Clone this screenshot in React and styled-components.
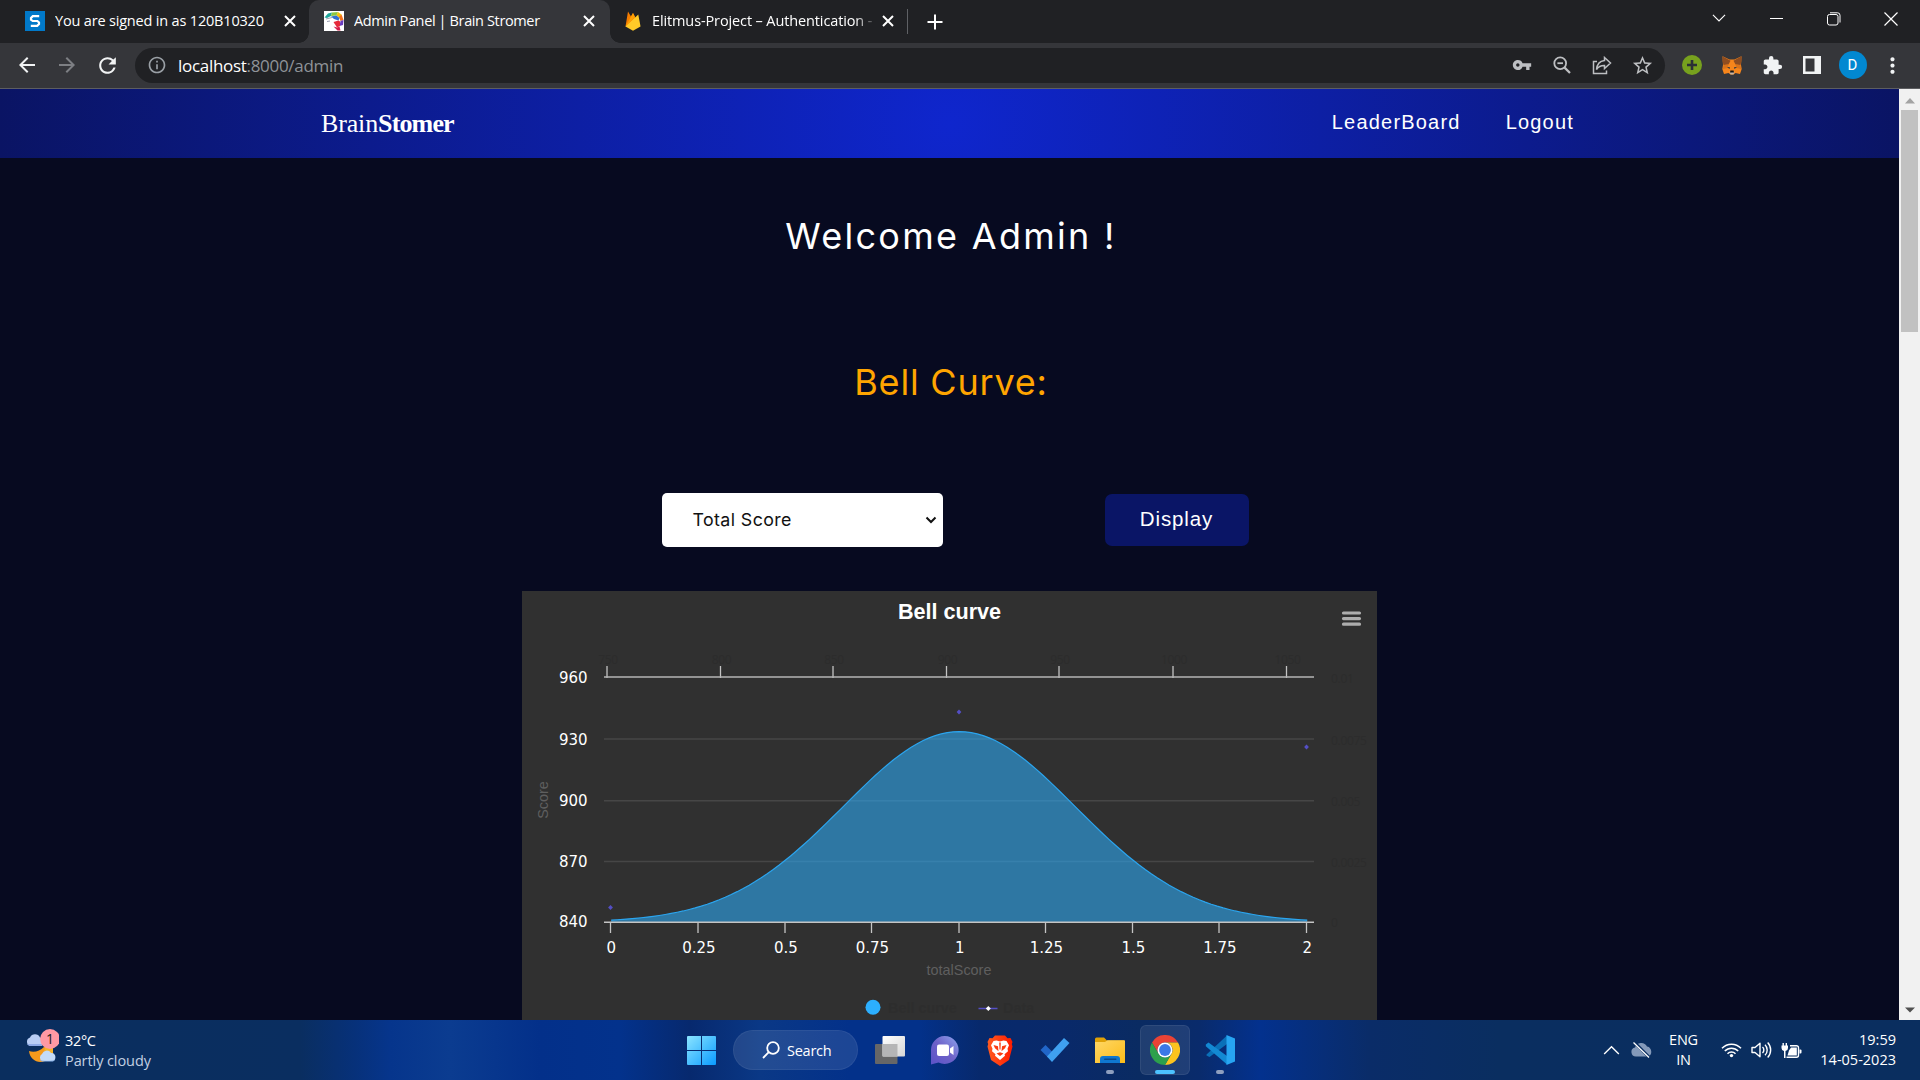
import React from "react";
import styled, { createGlobalStyle } from "styled-components";
import {
  MdArrowBack,
  MdArrowForward,
  MdRefresh,
  MdInfoOutline,
  MdVpnKey,
  MdStarBorder,
  MdExtension,
  MdMoreVert,
} from "react-icons/md";

const GlobalStyle = createGlobalStyle`
  * { box-sizing: border-box; }
  html, body { margin: 0; padding: 0; background: #070920; overflow: hidden; }
  body { font-family: "Open Sans", "Noto Sans", sans-serif; }
  svg { display: block; flex: none; }
`;

const Screen = styled.div`
  width: 1920px;
  height: 1080px;
  display: flex;
  flex-direction: column;
  overflow: hidden;
`;

/* ---------- Browser chrome ---------- */

const TabStrip = styled.div`
  height: 43px;
  flex: none;
  display: flex;
  background: #202124;
`;

const Tab = styled.div`
  position: relative;
  width: ${(p) => p.$width}px;
  height: 43px;
  padding: 0 ${(p) => p.$right}px 2px ${(p) => p.$left}px;
  display: flex;
  align-items: center;
  color: #fff;
  background: ${(p) => (p.$active ? "#35363a" : "transparent")};
  border-radius: 10px 10px 0 0;
  ${(p) =>
    p.$active &&
    `
    &::before, &::after {
      content: "";
      position: absolute;
      bottom: 0;
      width: 10px;
      height: 10px;
    }
    &::before {
      left: -10px;
      background: radial-gradient(circle at 0 0, transparent 9.5px, #35363a 10px);
    }
    &::after {
      right: -10px;
      background: radial-gradient(circle at 100% 0, transparent 9.5px, #35363a 10px);
    }
  `}
`;

const TabTitle = styled.span`
  flex: 1;
  margin-left: ${(p) => p.$gap}px;
  font-size: 14.5px;
  line-height: 20px;
  letter-spacing: ${(p) => p.$spacing}px;
  white-space: nowrap;
  overflow: hidden;
  ${(p) => p.$fade && "mask-image: linear-gradient(90deg, #000 88%, transparent 98%);"}
`;

const TabDivider = styled.div`
  width: 1px;
  height: 25px;
  margin-top: 9px;
  background: #5f6165;
`;

const NewTab = styled.div`
  width: 54px;
  height: 43px;
  display: flex;
  align-items: center;
  justify-content: center;
`;

const WindowControls = styled.div`
  margin-left: auto;
  height: 37px;
  display: flex;
  align-items: center;
`;

const WindowButton = styled.div`
  width: 57.3px;
  display: flex;
  justify-content: center;
`;

const Toolbar = styled.div`
  height: 46px;
  flex: none;
  display: flex;
  align-items: center;
  padding: 0 8px 1px 7px;
  background: #35363a;
  border-bottom: 1px solid #5d5e61;
`;

const ToolSlot = styled.div`
  width: ${(p) => p.$width || 40}px;
  flex: none;
  display: flex;
  justify-content: center;
  color: ${(p) => p.$color || "#f1f3f4"};
`;

const Omnibox = styled.div`
  width: 1530px;
  height: 35px;
  margin-left: 8px;
  padding-left: 12px;
  border-radius: 18px;
  display: flex;
  align-items: center;
  background: #202124;
  color: #9aa0a6;
`;

const Url = styled.span`
  flex: 1;
  margin-left: 11px;
  padding-top: 1px;
  font-size: 17px;
  line-height: 24px;
  letter-spacing: -0.3px;
  color: #8f9398;
  b { font-weight: 400; color: #fff; }
`;

const Avatar = styled.div`
  width: 28px;
  height: 28px;
  border-radius: 50%;
  margin-left: 1px;
  display: flex;
  align-items: center;
  justify-content: center;
  background: #0288d1;
  color: #fff;
  font: 15px/28px Roboto, sans-serif;
`;

/* ---------- Page ---------- */

const Viewport = styled.div`
  height: 931px;
  flex: none;
  display: flex;
`;

const Page = styled.main`
  width: 1899px;
  display: flex;
  flex-direction: column;
  align-items: center;
  background: #070a20;
  overflow: hidden;
`;

const SiteHeader = styled.header`
  width: 100%;
  height: 69px;
  flex: none;
  padding: 0 325px 0 321px;
  display: flex;
  justify-content: space-between;
  align-items: center;
  background: radial-gradient(circle 950px at center, #0f26cd 0%, #0a1464 100%);
`;

const Brand = styled.div`
  color: #fff;
  font: 26px/36px "Liberation Serif", serif;
  letter-spacing: -0.15px;
  b { letter-spacing: -0.85px; }
`;

const Nav = styled.nav`
  display: flex;
  gap: 45px;
  padding-bottom: 4px;
`;

const NavLink = styled.a`
  color: #fff;
  font: 20px/28px "Liberation Sans", sans-serif;
  letter-spacing: 1.2px;
`;

const Heading = styled.h1`
  height: 48px;
  flex: none;
  margin: ${(p) => p.$top}px 0 0;
  padding-left: 3px;
  color: ${(p) => p.$color};
  font: 400 36px/48px Inter, sans-serif;
  letter-spacing: ${(p) => p.$spacing}px;
  white-space: pre;
`;

const Controls = styled.div`
  height: 54px;
  flex: none;
  margin: 87px 0 44px 12px;
  display: flex;
  align-items: center;
  gap: 162px;
`;

const SelectBox = styled.div`
  width: 281px;
  height: 54px;
  padding: 0 6px 0 30.5px;
  border-radius: 5px;
  display: flex;
  align-items: center;
  justify-content: space-between;
  background: #fff;
  color: #111;
  font: 17.8px/26px Inter, sans-serif;
  letter-spacing: 0.4px;
`;

const DisplayButton = styled.button`
  width: 144px;
  height: 52px;
  padding: 0 1px 2px 0;
  border: 0;
  border-radius: 7px;
  background: #0a1566;
  color: #fff;
  font: 20.5px/26px "Liberation Sans", sans-serif;
  letter-spacing: 0.9px;
`;

const ChartPanel = styled.section`
  width: 855px;
  height: 430px;
  flex: none;
  background: #303030;
`;

const Scrollbar = styled.div`
  width: 21px;
  display: flex;
  flex-direction: column;
  align-items: center;
  padding: 9px 0 7px;
  background: #f1f1f1;
`;

const Thumb = styled.div`
  width: 17px;
  height: 222px;
  margin-top: 6px;
  margin-bottom: auto;
  background: #c1c1c1;
`;

/* ---------- Taskbar ---------- */

const Taskbar = styled.footer`
  height: 60px;
  flex: none;
  display: flex;
  background: linear-gradient(
    90deg,
    #0a2e5e 0px, #0a2e60 300px, #07317a 355px, #06358c 390px, #0b3c90 450px,
    #03308a 540px, #03328c 620px, #07296e 690px, #0a3886 760px, #03318a 850px,
    #03318a 920px, #07296c 980px, #09296a 1060px, #0a2b62 1140px, #092b6c 1200px,
    #03318e 1260px, #0a2c68 1370px, #0a2e60 1500px, #0a2e5f 1920px
  );
  color: #fff;
`;

const Weather = styled.div`
  width: 660px;
  padding: 7px 0 0 25px;
  display: flex;
`;

const WeatherText = styled.div`
  margin: 4px 0 0 6px;
  font-size: 14.5px;
  line-height: 20px;
  letter-spacing: -0.35px;
  div + div { color: #c3d0e2; letter-spacing: -0.08px; }
`;

const Dock = styled.div`
  width: 590px;
  padding: 5px 0 0 12px;
  display: flex;
`;

const DockItem = styled.div`
  position: relative;
  width: ${(p) => p.$width || 55}px;
  height: 50px;
  display: flex;
  align-items: center;
  justify-content: center;
`;

const Indicator = styled.span`
  position: absolute;
  bottom: 1px;
  left: 50%;
  width: ${(p) => (p.$active ? 20 : 8)}px;
  height: 4px;
  border-radius: 2px;
  transform: translateX(-50%);
  background: ${(p) => (p.$active ? "#4cc2ff" : "#8e9fbf")};
`;

const ActiveTile = styled.div`
  width: 50px;
  height: 50px;
  border-radius: 6px;
  display: flex;
  align-items: center;
  justify-content: center;
  background: rgba(255, 255, 255, 0.09);
  border: 1px solid rgba(255, 255, 255, 0.07);
`;

const SearchPill = styled.div`
  width: 125px;
  height: 40px;
  border-radius: 20px;
  padding: 0 0 0 28px;
  display: flex;
  align-items: center;
  gap: 7px;
  background: rgba(255, 255, 255, 0.1);
  border: 1px solid rgba(255, 255, 255, 0.06);
  font-size: 14.5px;
  letter-spacing: -0.25px;
`;

const Tray = styled.div`
  margin-left: auto;
  height: 60px;
  display: flex;
  align-items: center;
  padding-right: 24px;
`;

const TrayText = styled.div`
  width: ${(p) => p.$width}px;
  padding-right: ${(p) => p.$inset || 0}px;
  font-size: 14.5px;
  line-height: 20px;
  letter-spacing: ${(p) => p.$spacing}px;
  text-align: ${(p) => p.$align};
`;

const TraySlot = styled.div`
  width: 30px;
  display: flex;
  justify-content: center;
`;

/* ---------- Icons ---------- */

const TabClose = () => (
  <svg width="12" height="12" viewBox="0 0 12 12" stroke="#fff" strokeWidth="2">
    <path d="M1 1l10 10M11 1L1 11" />
  </svg>
);

const SFavicon = () => (
  <svg width="20" height="20" viewBox="0 0 20 20">
    <rect width="20" height="20" fill="#0179c9" />
    <path d="M14.2 5.2H7.8L6 7v1.6l1.8 1.4h4.6l1.6 1.4V13l-1.8 1.8H5.8" fill="none" stroke="#fff" strokeWidth="2.2" />
  </svg>
);

const BrainFavicon = () => (
  <svg width="20" height="20" viewBox="0 0 20 20">
    <rect width="20" height="20" fill="#fff" />
    <path d="M0.500 6.500L4 2.500 8 1.500 7 5 3 7z" fill="#1fa79b" />
    <path d="M8 1.500L14 1l-1.500 3.500L7 5z" fill="#8cc63f" />
    <path d="M14 1l3.500 2.500L16 7l-3.500-2.500z" fill="#f4c20d" />
    <path d="M17.500 3.500L19.500 9l-3 1L15 6z" fill="#f0701d" />
    <path d="M7 5.500L12.500 4.500 15.500 7l-1 2.500L10 8z" fill="#2f6fd0" />
    <path d="M16.500 10l3-1-0.500 5-3.500 1z" fill="#6a3cc0" />
    <path d="M9.500 11l5-1.500 1.500 1v4.500l-3 1.500z" fill="#e62a3a" />
    <path d="M9.500 15.500l3.500 1 2.500-1 1 4h-3z" fill="#d51c4a" />
    <path d="M2 8l6-1.500M3 10.500L6 10" stroke="#8c93a8" strokeWidth="0.900" />
  </svg>
);

const FirebaseFavicon = () => (
  <svg width="16" height="20" viewBox="0 0 16 20">
    <path d="M0.500 15.500L3 0.500l3 5L8 2l7 13.500z" fill="#f57c00" />
    <path d="M0.500 15.500L8 2l2 4z" fill="#ffa000" />
    <path d="M0.500 15.500L13.300 3.600 15.500 15.500 8 19.700z" fill="#ffca28" />
  </svg>
);

const ZoomOutIcon = () => (
  <svg width="18" height="18" viewBox="0 0 18 18" fill="none" stroke="#bdbfc2" strokeWidth="1.8">
    <circle cx="7.200" cy="7.200" r="5.900" />
    <path d="M11.600 11.600l5.400 5.400" strokeWidth="2.200" />
    <path d="M4.400 7.200h5.600" />
  </svg>
);

const ShareIcon = () => (
  <svg width="20" height="19" viewBox="0 0 20 19" fill="none" stroke="#bdbfc2" strokeWidth="1.500">
    <path d="M5 5.500H1.500V17.500H14.500V14.500" />
    <path d="M12.500 1.500L18.500 7l-6 5.500V9.500C8.500 9.400 6.300 10.700 4.500 13.500 5 8.500 8 5 12.500 4.500z" />
  </svg>
);

const FoxIcon = () => (
  <svg width="20" height="19" viewBox="0 0 20 19">
    <path d="M0.500 0.300L7.500 3.500h5L19.500 0.300 19 9l0.700 4-1.700 5-4.500-1L11.500 18.500h-3L6.500 17 2 18l-1.700-5L1 9z" fill="#f6851b" />
    <path d="M0.500 0.300L8.500 4.800 6.500 8.500 1.500 9 0.500 5z" fill="#8f4d20" />
    <path d="M19.500 0.300L11.500 4.800l2 3.700 5 0.500 1-4z" fill="#8f4d20" />
    <path d="M1.500 9L6.500 8.500 5.500 12 1 13z" fill="#d9731a" />
    <path d="M18.500 9l-5-0.500 1 3.500 4.500 1z" fill="#d9731a" />
    <path d="M5 11l3 0.300L7.500 13zM15 11l-3 0.300 0.500 1.700z" fill="#233447" />
    <path d="M7.500 15.500L8.500 18.500h3l1-3z" fill="#c8b4a2" />
    <path d="M8.400 14.600h3.200l0.400 1.900H8z" fill="#161616" />
  </svg>
);

const Chevron = ({ up, size = 15, color = "#fff" }) => (
  <svg width={size} height={size * 0.6} viewBox="0 0 15 9" fill="none" stroke={color} strokeWidth="1.200">
    <path d={up ? "M1 8l6.500-6.500L14 8" : "M1 1l6.500 6.500L14 1"} />
  </svg>
);

const WeatherIcon = () => (
  <svg width="34" height="38" viewBox="0 0 34 38">
    <path d="M4 24c5 2 11 0 15-4l5-1 4 1v9l-8 5c-7 3-15-1-16-10z" fill="#f59a1c" />
    <path d="M20 20h8v6h-9z" fill="#f7b32a" />
    <path d="M5 19a4.500 4.500 0 0 1 0-8.500 5.500 5.500 0 0 1 10 0c3 0 4 8 1 8.500z" fill="#b8cdf5" />
    <path d="M5 19a4.500 4.500 0 0 1-3-2h16l-1 2z" fill="#8eaae6" />
    <path d="M17 34a4 4 0 0 1 0-7 5 5 0 0 1 9-1c5-1 6 7 2 8z" fill="#c4dbf8" />
    <path d="M14 33c3 1 13 1 16 0l-2 1.500H17z" fill="#8cb4ea" />
    <circle cx="25" cy="12" r="9.900" fill="#ff99a4" />
    <text x="25" y="17" textAnchor="middle" fontSize="14" fontFamily="Open Sans, sans-serif" fill="#1b1b1b">1</text>
  </svg>
);

const WindowsLogo = () => (
  <svg width="29" height="29" viewBox="0 0 29 29">
    <defs>
      <linearGradient id="win" x1="0" y1="0" x2="1" y2="1">
        <stop offset="0" stopColor="#8be4ff" />
        <stop offset="1" stopColor="#0a9bff" />
      </linearGradient>
    </defs>
    <path d="M1 0h13v14H0V1a1 1 0 0 1 1-1zM15 0h13a1 1 0 0 1 1 1v13H15zM0 15h14v14H1a1 1 0 0 1-1-1zM15 15h14v13a1 1 0 0 1-1 1H15z" fill="url(#win)" />
  </svg>
);

const TaskViewIcon = () => (
  <svg width="30" height="28" viewBox="0 0 30 28">
    <defs>
      <linearGradient id="tv" x1="0" y1="0" x2="1" y2="1">
        <stop offset="0" stopColor="#fff" />
        <stop offset="1" stopColor="#d6d6d6" />
      </linearGradient>
    </defs>
    <rect x="0" y="8" width="22.500" height="20" rx="1" fill="#666667" />
    <rect x="7.500" y="0" width="22.500" height="20.500" rx="1" fill="url(#tv)" />
    <rect x="7.500" y="8" width="15" height="12.500" fill="#b5b5b6" />
  </svg>
);

const ChatIcon = () => (
  <svg width="29" height="29" viewBox="0 0 29 29">
    <defs>
      <linearGradient id="chat" x1="0" y1="1" x2="1" y2="0">
        <stop offset="0" stopColor="#5a52c8" />
        <stop offset="0.500" stopColor="#6e62c8" />
        <stop offset="1" stopColor="#8ea6f0" />
      </linearGradient>
    </defs>
    <path d="M14.500 0a14 14 0 1 1-6 26.600L1 28.500V15A14 14 0 0 1 14.500 0z" fill="url(#chat)" />
    <rect x="7" y="8.500" width="12" height="11.500" rx="2" fill="#fff" />
    <path d="M20 12.500l3.500-2.500v9L20 16.500z" fill="#fff" />
  </svg>
);

const BraveIcon = () => (
  <svg width="26" height="31" viewBox="0 0 26 31">
    <defs>
      <linearGradient id="brave">
        <stop offset="0" stopColor="#ff5a1f" />
        <stop offset="1" stopColor="#ff1c00" />
      </linearGradient>
    </defs>
    <path d="M8 0.500h10l2.500 2.700 3-0.300 2 4-0.700 2 0.700 2.500-3.500 13.500-9 6-9-6L0.500 11.400l0.700-2.500-0.700-2 2-4 3 0.300z" fill="url(#brave)" />
    <path d="M13 6.500l3.500-0.900 3 0.400 2.500 4.200-1.500 3.500 0.500 2.500-3.500 3 0.500 1.500L13 25l-5-4.300 0.500-1.500-3.500-3 0.500-2.500L4 10.200 6.500 6l3-0.400z" fill="#fff" />
    <path d="M6.500 10l4.500 1.200 0.500 5-3.500-3zM19.500 10l-4.500 1.200-0.500 5 3.500-3zM9.500 18.500l3.500-1.300 3.500 1.300-3.500 2.600zM12.200 7.500h1.600l-0.300 7h-1z" fill="#fb3b10" />
  </svg>
);

const TodoIcon = () => (
  <svg width="30" height="26" viewBox="0 0 30 26">
    <path d="M0.500 13l5-5 8 8-5 5z" fill="#2166c9" />
    <path d="M7 19.500L24 1l5.500 5L12 25z" fill="#3fa0f0" />
  </svg>
);

const FolderIcon = () => (
  <svg width="30" height="27" viewBox="0 0 30 27">
    <defs>
      <linearGradient id="fold" x1="0" y1="0" x2="1" y2="1">
        <stop offset="0" stopColor="#ffd766" />
        <stop offset="1" stopColor="#fcbc19" />
      </linearGradient>
    </defs>
    <path d="M0 5V2a1.500 1.500 0 0 1 1.500-1.500H9l3 3h17A1 1 0 0 1 30 5v4H0z" fill="#e0a106" />
    <path d="M0 5h10l2.500-1.800H29a1 1 0 0 1 1 1V26H0z" fill="url(#fold)" />
    <path d="M5 26v-4a3 3 0 0 1 3-3h14a3 3 0 0 1 3 3v4z" fill="#0f77d0" />
    <rect x="9" y="21.500" width="12.500" height="1.500" rx="0.700" fill="#0a4a8c" />
  </svg>
);

const ChromeIcon = () => (
  <svg width="30" height="30" viewBox="0 0 30 30">
    <path d="M2 7.500A15 15 0 0 1 28 7.500H15a7.500 7.500 0 0 0-6.500 11.200z" fill="#ea4335" />
    <path d="M28 7.500A15 15 0 0 1 15 30l6.500-11.200A7.500 7.500 0 0 0 15 7.500z" fill="#fcc31e" />
    <path d="M15 30A15 15 0 0 1 2 7.500l6.500 11.300a7.500 7.500 0 0 0 13 0z" fill="#2da04c" />
    <circle cx="15" cy="15" r="7.500" fill="#fff" />
    <circle cx="15" cy="15" r="5.900" fill="#3b78e7" />
  </svg>
);

const CodeIcon = () => (
  <svg width="30" height="30" viewBox="0 0 30 30">
    <path d="M1.500 19.500L22 0.500v8.500L4.500 22l-3-1.500z" fill="#0a70b8" />
    <path d="M0.800 9.500l2.700-2L22 21v8.500L0.800 11.200z" fill="#1389d3" />
    <path d="M21.500 0L30 3.500v23L21.500 30z" fill="#27a5f2" />
  </svg>
);

const CloudOff = () => (
  <svg width="21" height="18" viewBox="0 0 21 18">
    <path d="M5 15.500a4.500 4.500 0 0 1-1-8.900A6.500 6.500 0 0 1 16 5.500c5 0.500 6 9 1 10z" fill="#8499b9" />
    <path d="M3 1l16 16" stroke="#0a2e60" strokeWidth="3" />
    <path d="M2.500 1.500L18 16.500" stroke="#fff" strokeWidth="1.300" />
  </svg>
);

const WifiIcon = () => (
  <svg width="21" height="16" viewBox="0 0 21 16" fill="none" stroke="#fff" strokeWidth="1.500">
    <path d="M1 6.300a13.200 13.200 0 0 1 19 0M3.800 9.100a9.200 9.200 0 0 1 13.400 0M6.500 11.700a5.500 5.500 0 0 1 8 0" />
    <circle cx="10.500" cy="13.600" r="1.700" fill="#fff" stroke="none" />
  </svg>
);

const VolumeIcon = () => (
  <svg width="21" height="18" viewBox="0 0 21 18" fill="none" stroke="#fff" strokeWidth="1.400">
    <path d="M1 6.500h3L9 2.200v13.600L4 11.500H1z" strokeLinejoin="round" />
    <path d="M11.500 6a4 4 0 0 1 0 6M14 3.700a7.500 7.500 0 0 1 0 10.600M16.700 1.500a11 11 0 0 1 0 15" />
  </svg>
);

const BatteryIcon = () => (
  <svg width="21" height="17" viewBox="0 0 21 17">
    <path d="M9 3.700h6.500a2 2 0 0 1 2 2v7.600a2 2 0 0 1-2 2H5.500" fill="none" stroke="#fff" strokeWidth="1.400" />
    <path d="M8 8.500L10 5.500h5.800v8H6.500z" fill="#fff" />
    <path d="M18.500 7.500h1a1 1 0 0 1 1 1v2a1 1 0 0 1-1 1h-1z" fill="#fff" />
    <path d="M0.500 3.500h1V1h1.400v2.500h1.700V1H6v2.500h1V6a3 3 0 0 1-2.500 3v7H3V9A3 3 0 0 1 0.500 6z" fill="#fff" />
  </svg>
);

/* ---------- Chart ---------- */

const MEAN_X = 437.2;
const SIGMA = 116;
const BASE_Y = 331.2;
const PEAK = 190.6;

const curve = Array.from({ length: 117 }, (_, i) => {
  const x = MEAN_X - 3 * SIGMA + i * 6;
  const y = BASE_Y - PEAK * Math.exp(-0.5 * ((x - MEAN_X) / SIGMA) ** 2);
  return `${x.toFixed(1)} ${y.toFixed(2)}`;
}).join("L");

const bottomTicks = [
  [88.500, "0"], [176, "0.25"], [263, "0.5"], [349.500, "0.75"], [437, "1"],
  [523.500, "1.25"], [610.500, "1.5"], [697, "1.75"], [784.500, "2"],
];
const topTicks = [
  [85, "750"], [198.500, "800"], [311, "850"], [424.500, "900"],
  [537, "950"], [651, "1000"], [764.500, "1050"],
];
const leftTicks = [
  [92, "960", "0.01"], [153.500, "930", "0.0075"], [215, "900", "0.005"],
  [276, "870", "0.0025"], [336, "840", "0"],
];
const points = [[88.500, 316.500], [437, 121], [784.500, 156]];

const AxisLabel = styled.text`
  font: 15px "DejaVu Sans", Verdana, sans-serif;
  letter-spacing: -0.05px;
  fill: #fff;
`;

const FaintLabel = styled.text`
  font: 12px "Open Sans", sans-serif;
  letter-spacing: -0.3px;
  fill: #2c2c2c;
`;

const AxisTitle = styled.text`
  font: 14.4px "Liberation Sans", Arial, sans-serif;
  fill: #5f5f5f;
`;

const ChartTitle = styled.text`
  font: bold 21.6px "Liberation Sans", Arial, sans-serif;
  fill: #fff;
`;

const LegendLabel = styled.text`
  font: bold 14.4px "Liberation Sans", Arial, sans-serif;
  fill: #2d2d2d;
`;

const BellChart = () => (
  <svg width="855" height="430" viewBox="0 0 855 430">
    <ChartTitle x="427.500" y="28" textAnchor="middle">Bell curve</ChartTitle>
    <path d="M821.500 22h16M821.500 27.600h16M821.500 33.200h16" stroke="#adadad" strokeWidth="3.200" strokeLinecap="round" />
    {topTicks.map(([x, label]) => (
      <g key={label}>
        <path d={`M${x} 75v12`} stroke="#c4c4c4" strokeWidth="1.300" />
        <FaintLabel x={x + 1} y="73" textAnchor="middle">{label}</FaintLabel>
      </g>
    ))}
    <path d="M82 148h710M82 209.700h710M82 270.500h710" stroke="#464646" strokeWidth="1.400" />
    <path d={`M${curve}V${BASE_Y}H${MEAN_X - 3 * SIGMA}z`} fill="#2caffe" fillOpacity="0.560" />
    <path d={`M${curve}`} fill="none" stroke="#2ba5ef" strokeWidth="1.200" />
    <path d="M82 86h710" stroke="#b4b4b4" strokeWidth="1.700" />
    <path d="M82 331.300h710" stroke="#c4c4c4" strokeWidth="1.400" />
    {bottomTicks.map(([x, label]) => (
      <g key={label}>
        <path d={`M${x} 331v11`} stroke="#c4c4c4" strokeWidth="1.300" />
        <AxisLabel x={x + 0.800} y="362" textAnchor="middle">{label}</AxisLabel>
      </g>
    ))}
    {leftTicks.map(([y, label, right]) => (
      <g key={label}>
        <AxisLabel x="65.500" y={y} textAnchor="end">{label}</AxisLabel>
        <FaintLabel x="809" y={y}>{right}</FaintLabel>
      </g>
    ))}
    {points.map(([x, y]) => (
      <path key={x} d={`M${x} ${y - 2.400}l2.400 2.400-2.400 2.400-2.400-2.400z`} fill="#544fc5" />
    ))}
    <AxisTitle x="437" y="384" textAnchor="middle">totalScore</AxisTitle>
    <AxisTitle transform="translate(26 209) rotate(-90)" textAnchor="middle">Score</AxisTitle>
    <circle cx="351" cy="416.300" r="7.500" fill="#2caffe" />
    <LegendLabel x="366" y="421.700">Bell curve</LegendLabel>
    <path d="M456.500 417.500h19" stroke="#544fc5" strokeWidth="1.500" />
    <path d="M466.300 415l2.500 2.500-2.500 2.500-2.500-2.500z" fill="#fff" />
    <LegendLabel x="481" y="421.700">Data</LegendLabel>
  </svg>
);

export default function App() {
  return (
    <>
      <GlobalStyle />
      <Screen>
        <TabStrip>
          <Tab $width={309} $left={25} $right={13}>
            <SFavicon />
            <TabTitle $gap={10} $spacing={-0.18}>You are signed in as 120B10320</TabTitle>
            <TabClose />
          </Tab>
          <Tab $active $width={301} $left={15} $right={15}>
            <BrainFavicon />
            <TabTitle $gap={10} $spacing={-0.37}>Admin Panel | Brain Stromer</TabTitle>
            <TabClose />
          </Tab>
          <Tab $width={297} $left={15} $right={13}>
            <FirebaseFavicon />
            <TabTitle $gap={11} $spacing={-0.12} $fade>Elitmus-Project – Authentication -</TabTitle>
            <TabClose />
          </Tab>
          <TabDivider />
          <NewTab>
            <svg width="16" height="16" viewBox="0 0 16 16" stroke="#fff" strokeWidth="2">
              <path d="M8 0.500v15M0.500 8h15" />
            </svg>
          </NewTab>
          <WindowControls>
            <WindowButton><Chevron size={14} /></WindowButton>
            <WindowButton>
              <svg width="13" height="13" viewBox="0 0 13 13"><path d="M0 6.500h13" stroke="#fff" /></svg>
            </WindowButton>
            <WindowButton>
              <svg width="14" height="14" viewBox="0 0 14 14" fill="none" stroke="#fff">
                <rect x="0.500" y="2.500" width="10.500" height="10.500" rx="2" />
                <path d="M3 0.800h7.500a2.500 2.500 0 0 1 2.500 2.500V10.500" />
              </svg>
            </WindowButton>
            <WindowButton>
              <svg width="14" height="14" viewBox="0 0 14 14" stroke="#fff" strokeWidth="1.200">
                <path d="M0.500 0.500l13 13M13.500 0.500l-13 13" />
              </svg>
            </WindowButton>
          </WindowControls>
        </TabStrip>

        <Toolbar>
          <ToolSlot><MdArrowBack size={24} /></ToolSlot>
          <ToolSlot $color="#7d7f83"><MdArrowForward size={24} /></ToolSlot>
          <ToolSlot><MdRefresh size={25} /></ToolSlot>
          <Omnibox>
            <MdInfoOutline size={20} />
            <Url><b>localhost</b>:8000/admin</Url>
            <ToolSlot $color="#bdbfc2"><MdVpnKey size={20} /></ToolSlot>
            <ToolSlot><ZoomOutIcon /></ToolSlot>
            <ToolSlot><ShareIcon /></ToolSlot>
            <ToolSlot $color="#bdbfc2"><MdStarBorder size={23} /></ToolSlot>
            <ToolSlot $width={3} />
          </Omnibox>
          <ToolSlot $width={7} />
          <ToolSlot>
            <svg width="20" height="20" viewBox="0 0 20 20">
              <circle cx="10" cy="10" r="10" fill="#77a11e" />
              <path d="M10 5v10M5 10h10" stroke="#2b3036" strokeWidth="2.600" />
            </svg>
          </ToolSlot>
          <ToolSlot><FoxIcon /></ToolSlot>
          <ToolSlot><MdExtension size={21} /></ToolSlot>
          <ToolSlot>
            <svg width="18" height="18" viewBox="0 0 18 18">
              <path fillRule="evenodd" d="M0 0h18v18H0zM2.500 2.500v13h9v-13z" fill="#f1f3f4" />
            </svg>
          </ToolSlot>
          <ToolSlot><Avatar>D</Avatar></ToolSlot>
          <ToolSlot><MdMoreVert size={25} /></ToolSlot>
        </Toolbar>

        <Viewport>
          <Page>
            <SiteHeader>
              <Brand>Brain<b>Stomer</b></Brand>
              <Nav>
                <NavLink>LeaderBoard</NavLink>
                <NavLink>Logout</NavLink>
              </Nav>
            </SiteHeader>
            <Heading $top={54} $color="#fff" $spacing={2.3}>Welcome Admin !</Heading>
            <Heading $top={98} $color="#ffa500" $spacing={0.8}>Bell Curve:</Heading>
            <Controls>
              <SelectBox>
                Total Score
                <svg width="12" height="8" viewBox="0 0 12 8" fill="none" stroke="#111" strokeWidth="2">
                  <path d="M1.500 1.500L6 6l4.500-4.500" />
                </svg>
              </SelectBox>
              <DisplayButton>Display</DisplayButton>
            </Controls>
            <ChartPanel><BellChart /></ChartPanel>
          </Page>
          <Scrollbar>
            <svg width="10" height="6" viewBox="0 0 10 6"><path d="M5 0l5 5.500H0z" fill="#a3a3a3" /></svg>
            <Thumb />
            <svg width="10" height="6" viewBox="0 0 10 6"><path d="M0 0.500h10L5 5.500z" fill="#505050" /></svg>
          </Scrollbar>
        </Viewport>

        <Taskbar>
          <Weather>
            <WeatherIcon />
            <WeatherText>
              <div>32°C</div>
              <div>Partly cloudy</div>
            </WeatherText>
          </Weather>
          <Dock>
            <DockItem $width={59}><WindowsLogo /></DockItem>
            <DockItem $width={129}>
              <SearchPill>
                <svg width="18" height="18" viewBox="0 0 18 18" fill="none" stroke="#fff" strokeWidth="1.800">
                  <circle cx="11" cy="7" r="5.800" />
                  <path d="M6.800 11.200L1 17" />
                </svg>
                Search
              </SearchPill>
            </DockItem>
            <DockItem $width={59}><TaskViewIcon /></DockItem>
            <DockItem $width={51}><ChatIcon /></DockItem>
            <DockItem $width={60}><BraveIcon /></DockItem>
            <DockItem $width={50}><TodoIcon /></DockItem>
            <DockItem $width={59}><FolderIcon /><Indicator /></DockItem>
            <DockItem $width={51}><ActiveTile><ChromeIcon /></ActiveTile><Indicator $active /></DockItem>
            <DockItem $width={59}><CodeIcon /><Indicator /></DockItem>
          </Dock>
          <Tray>
            <TraySlot><Chevron up size={17} /></TraySlot>
            <TraySlot><CloudOff /></TraySlot>
            <TrayText $width={60} $inset={5} $spacing={-0.2} $align="center">
              <div>ENG</div>
              <div>IN</div>
            </TrayText>
            <TraySlot><WifiIcon /></TraySlot>
            <TraySlot><VolumeIcon /></TraySlot>
            <TraySlot><BatteryIcon /></TraySlot>
            <TrayText $width={90} $spacing={0} $align="right">
              <div>19:59</div>
              <div>14-05-2023</div>
            </TrayText>
          </Tray>
        </Taskbar>
      </Screen>
    </>
  );
}
